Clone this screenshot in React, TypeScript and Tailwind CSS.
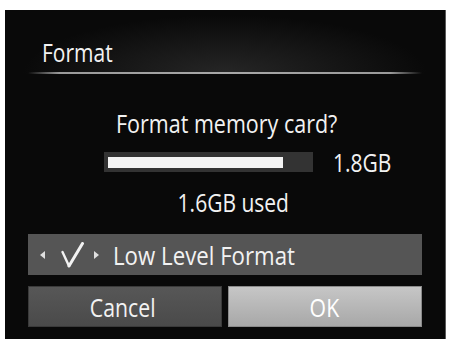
const font = { fontFamily: '"Open Sans", "Liberation Sans", sans-serif' };

const Check = () => (
  <svg width="24" height="26" viewBox="0 0 24 26" className="shrink-0">
    <path d="M1.5 10 L8 24" stroke="#f2f2f2" strokeWidth="2.4" strokeLinecap="round" fill="none" />
    <path d="M8 24 L21.5 1.5" stroke="#f2f2f2" strokeWidth="3" strokeLinecap="round" fill="none" />
  </svg>
);

const App = () => {
  return (
    <div className="w-[451px] h-[343px] bg-white pt-[10px] pl-[5px]">
      <div
        className="w-[441px] h-[329px] bg-[#090909] border-r border-[#5a5a5a] flex flex-col text-[#f2f2f2] font-medium"
        style={font}
      >
        {/* header */}
        <div className="bg-[radial-gradient(ellipse_at_50%_100%,#262626,transparent_65%)]">
          <div className="pt-[27px] pl-[37px] text-[25px] leading-[30px]">
            <span className="inline-block origin-left scale-x-[0.84]">Format</span>
          </div>
          <div className="mt-[5px] mx-[23px] h-[2px] bg-[linear-gradient(to_right,transparent,#9a9a9a_8%,#a8a8a8_50%,#9a9a9a_92%,transparent)]" />
        </div>

        <div className="mt-[34px] pl-[4px] text-center text-[25px] leading-[30px]">
          <span className="inline-block scale-x-[0.86]">Format memory card?</span>
        </div>

        {/* capacity bar */}
        <div className="mt-[14px] h-[20px] pl-[99px] flex items-center gap-[20px]">
          <div className="w-[209px] h-[20px] bg-[#333] flex items-center pl-[4px]">
            <div className="w-[175px] h-[11px] bg-[#f4f4f4]" />
          </div>
          <span className="inline-block origin-left scale-x-[0.84] text-[25px] leading-[30px]">1.8GB</span>
        </div>

        <div className="mt-[15px] pl-[16px] text-center text-[25px] leading-[30px]">
          <span className="inline-block scale-x-[0.84]">1.6GB used</span>
        </div>

        {/* option row */}
        <div className="mt-[17px] mx-[23px] h-[41px] bg-[#555] flex items-center">
          <div className="ml-[12px] w-0 h-0 border-y-[4px] border-y-transparent border-r-[5px] border-r-[#e0e0e0]" />
          <div className="ml-[16px]">
            <Check />
          </div>
          <div className="ml-[9px] w-0 h-0 border-y-[4px] border-y-transparent border-l-[5px] border-l-[#e0e0e0]" />
          <span className="ml-[14px] inline-block origin-left scale-x-[0.89] text-[25px] leading-[30px]">Low Level Format</span>
        </div>

        {/* buttons */}
        <div className="mt-[11px] mx-[23px] h-[41px] flex gap-[6px]">
          <button className="w-[196px] bg-[linear-gradient(#575757,#4a4a4a)] border border-[#3a3a3a] flex items-center justify-center text-[25px] leading-[30px]">
            <span className="inline-block scale-x-[0.85] -translate-x-[2px]">Cancel</span>
          </button>
          <button className="w-[197px] bg-[linear-gradient(#c6c6c6,#a8a8a8)] border border-[#8a8a8a] flex items-center justify-center text-[25px] leading-[30px] text-white">
            <span className="inline-block scale-x-[0.85]">OK</span>
          </button>
        </div>
      </div>
    </div>
  );
};

export default App;
